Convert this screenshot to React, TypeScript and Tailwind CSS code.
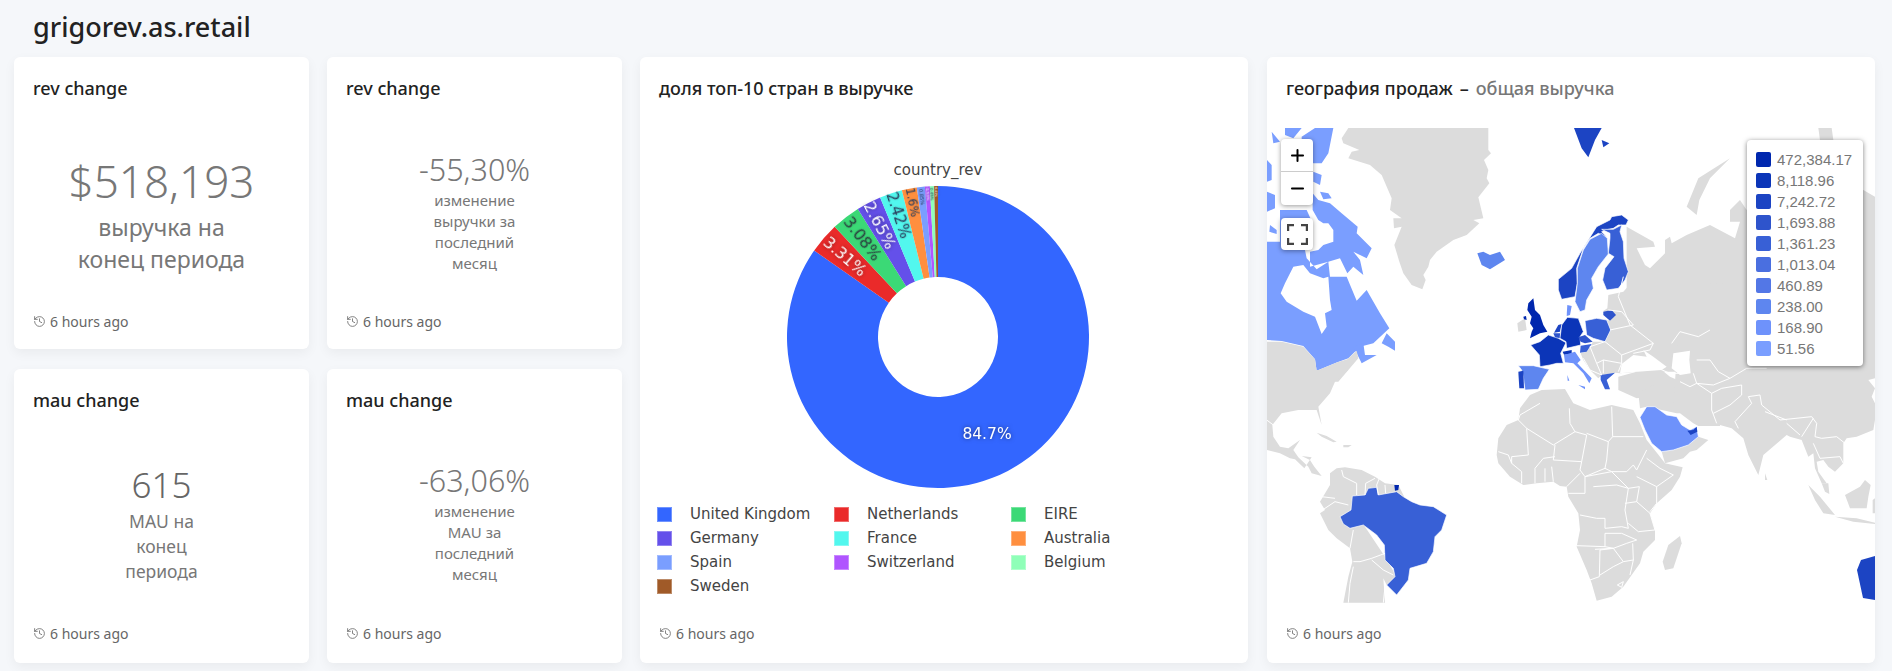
import React from 'react'
import { History, Plus, Minus } from 'lucide-react'

const Z5 = 'translate(1260 110) scale(0.33333)'
const Z6 = 'translate(1570 110) scale(0.33333)'
const Z8 = 'translate(1490 200) scale(0.33333)'
const Z9 = 'translate(1680 340) scale(0.33333)'
const Z10 = 'translate(1480 380) scale(0.33333)'
const Z11 = 'translate(1265 370) scale(0.33333)'

const GRAY = '#dcdcdc'
const C1 = '#0027ae'
const C2 = '#0b35b8'
const C3 = '#1c44c3'
const C4 = '#2e54cc'
const C5 = '#3860d6'
const C7 = '#5377e6'
const C8 = '#5e86ef'
const C9 = '#6e92fb'
const C10 = '#7a9eff'

const slices = [
  { name: 'United Kingdom', color: '#3366ff', pct: 84.7 },
  { name: 'Netherlands', color: '#ea2a2a', pct: 3.31, label: '3.31%', fill: '#fff', size: 16, r: 123 },
  { name: 'EIRE', color: '#3bd976', pct: 3.08, label: '3.08%', fill: '#2a3f3f', size: 16, r: 124 },
  { name: 'Germany', color: '#6450ea', pct: 2.65, label: '2.65%', fill: '#fff', size: 16, r: 126 },
  { name: 'France', color: '#52f7ee', pct: 2.42, label: '2.42%', fill: '#2a3f5f', size: 15, r: 128 },
  { name: 'Australia', color: '#ff8f3f', pct: 1.6, label: '1.6%', fill: '#2a3f5f', size: 11.5, r: 137 },
  { name: 'Spain', color: '#7a9eff', pct: 0.85, label: '0.85%', fill: '#2a3f5f', size: 5, r: 141 },
  { name: 'Switzerland', color: '#b055ff', pct: 0.53, label: '0.53%', fill: '#fff', size: 4, r: 143 },
  { name: 'Belgium', color: '#8fffb8', pct: 0.45, label: '0.45%', fill: '#2a3f5f', size: 4, r: 143 },
  { name: 'Sweden', color: '#a05a28', pct: 0.41, label: '0.41%', fill: '#fff', size: 3, r: 145 },
]

const CX = 298
const CY = 209
const R = 151
const RI = 60

function point(r: number, deg: number) {
  const a = (deg * Math.PI) / 180
  return [CX + r * Math.sin(a), CY - r * Math.cos(a)]
}

function slicePath(from: number, to: number) {
  const large = to - from > 180 ? 1 : 0
  const [x1, y1] = point(R, from)
  const [x2, y2] = point(R, to)
  const [x3, y3] = point(RI, to)
  const [x4, y4] = point(RI, from)
  return `M${x1} ${y1}A${R} ${R} 0 ${large} 1 ${x2} ${y2}L${x3} ${y3}A${RI} ${RI} 0 ${large} 0 ${x4} ${y4}Z`
}

function DonutChart() {
  let start = 0
  const parts = slices.map((s) => {
    const from = start
    const to = start + (s.pct / 100) * 360
    start = to
    return { ...s, from, to }
  })
  return (
    <svg width="608" height="372" className="block">
      <text x="298" y="47" textAnchor="middle" fontSize="15" fill="#444" fontFamily="DejaVu Sans, sans-serif">
        country_rev
      </text>
      {parts.map((p) => (
        <path key={p.name} d={slicePath(p.from, p.to)} fill={p.color} />
      ))}
      {parts
        .filter((p) => p.label)
        .map((p) => {
          const mid = (p.from + p.to) / 2
          const [x, y] = point(p.r ?? 122, mid)
          return (
            <text
              key={p.name}
              x={x}
              y={y}
              fontSize={p.size}
              fill={p.fill}
              textAnchor="middle"
              dominantBaseline="central"
              fontFamily="DejaVu Sans, sans-serif"
              transform={`rotate(${mid - 270} ${x} ${y})`}
              className={p.fill === '#fff' ? 'drop-shadow-[0_0_2px_rgba(0,0,0,0.45)]' : 'drop-shadow-[0_0_1px_rgba(0,0,0,0.2)]'}
            >
              {p.label}
            </text>
          )
        })}
      <text
        x="347"
        y="306"
        fontSize="15.5"
        fill="#fff"
        textAnchor="middle"
        dominantBaseline="central"
        fontFamily="DejaVu Sans, sans-serif"
        className="drop-shadow-[0_0_2px_rgba(0,0,0,0.5)]"
      >
        84.7%
      </text>
    </svg>
  )
}

function Land({ g, d, fill = GRAY, stroke = false }: { g: string; d: string; fill?: string; stroke?: boolean }) {
  return <path transform={g} d={d} fill={fill} stroke={stroke ? '#fff' : 'none'} strokeWidth={stroke ? 2 : 0} strokeLinejoin="round" />
}

function Border({ g, d }: { g: string; d: string }) {
  return <path transform={g} d={d} fill="none" stroke="#fff" strokeWidth={3} strokeLinejoin="round" />
}

function WorldMap() {
  return (
    <svg viewBox="1267 128 608 475" width="608" height="475" className="block">
      {/* north america */}
      <Land g={Z5} fill={C10} d="M35,65L60,95 40,100ZM75,54L125,54 100,85 75,75ZM125,80L165,54 220,54 205,130 185,160 160,160 125,130ZM21,150L35,165 35,210 21,215ZM160,185L185,195 180,225 160,215ZM21,245L45,255 45,295 21,305ZM180,245L205,250 215,265 190,268ZM30,345L50,360 50,372 28,365ZM60,300L140,300 158,340 150,420 60,420Z" />
      <Land g={Z5} fill={C10} d="M21,395L130,395 140,445 170,478 205,455 240,445 262,490 280,470 310,495 300,450 280,425 320,445 335,415 290,370 293,350 245,310 210,280 175,270 158,250 158,300 175,330 190,340 205,340 220,360 220,395 190,405 175,420 150,425 150,470 205,455 210,500 260,500 290,572 320,540 360,610 388,655 340,700 300,710 265,745 232,757 170,782 165,748 130,708 65,693 21,690Z" />
      <Land g={Z5} fill="#fff" d="M62,550L75,520 100,470 130,465 150,490 190,505 205,500 210,570 215,600 195,610 200,650 185,672 165,620 130,605 80,575Z" />
      <Land g={Z5} fill={C10} d="M365,700L380,670 405,695 405,722 385,710ZM280,712L310,700 315,735 350,735 305,760 290,730Z" />
      <Land g={Z5} d="M21,695L65,695 130,710 165,748 170,782 232,757 262,748 290,722 295,745 235,815 21,815Z" />
      <Land g={Z11} d="M5,0L250,0 210,35 195,70 160,110 170,165 155,120 100,120 50,130 22,165 25,200 45,230 70,235 105,210 85,240 100,262 130,290 140,310 170,318 148,290 135,270 110,258 140,262 118,295 90,268 75,265 45,250 5,240Z" />
      <Land g={Z11} d="M155,188L185,198 215,215 205,217 170,200ZM235,225L260,225 250,232 235,232Z" />
      <Border g={Z11} d="M5,150L25,165" />
      {/* south america */}
      <Land g={Z11} d="M195,310L215,295 240,292 290,300 330,320 360,340 400,345 420,385 300,470 360,560 395,620 365,645 355,625 360,698 235,698 250,620 262,575 255,535 215,505 190,480 165,430 180,420 165,395 195,345Z" />
      <Land g={Z11} fill={C5} stroke d="M262,378L300,375 310,355 335,352 340,375 395,365 415,380 440,395 465,405 505,410 545,435 530,480 510,500 505,545 485,580 435,595 430,630 395,675 365,645 390,620 385,595 360,570 358,525 335,495 295,465 255,475 235,462 225,440 258,420Z" />
      <Land g={Z11} fill={C1} d="M388,345L402,345 400,360 390,362Z" />
      <Border g={Z11} d="M230,300L235,320 275,340 275,375M300,375L302,340 330,325M345,320L335,345 340,375M360,345L362,370M165,425L210,395 250,405M170,380L210,385M255,535L265,480M265,575L285,575 320,565 360,550M320,570L355,600 385,615M265,590L255,640 250,698M355,698L360,650" />
      {/* greenland, iceland, svalbard */}
      <Land g={Z5} d="M245,85L265,54 685,54 685,120 693,130 672,150 685,180 680,205 688,220 668,245 655,262 670,325 640,330 658,340 620,375 580,390 530,425 510,450 505,470 490,495 497,510 487,538 455,525 430,490 418,455 403,405 425,350 402,355 400,325 425,325 390,300 395,265 365,195 330,165 265,145 275,125 298,120 250,100Z" />
      <Land g={Z5} fill={C8} d="M652,430L670,425 690,435 720,425 735,450 690,478 665,465Z" />
      <Land g={Z6} fill={C3} d="M12,54L95,54 75,90 55,142 35,115ZM95,90L118,100 100,112Z" />
      {/* eurasia */}
      <Land g={Z6} d="M170,350L250,395 255,410 200,415 225,465 240,475 285,430 285,390 300,380 305,400 350,375 420,345 495,385 510,335 480,335 480,300 510,270 530,300 560,200 880,240 915,260 915,780 170,780Z" />
      <Land g={Z6} d="M480,145L385,205 350,290 380,315 388,270 420,205ZM745,54L785,54 790,90 750,90Z" />
      <Land g={Z8} d="M412,262L400,275 355,285 352,325 340,333 345,345 362,362 350,360 362,390 345,425 308,425 305,435 290,455 272,460 280,480 300,510 325,535 335,525 375,518 390,520 440,515 700,515 700,250Z" />
      <Land g={Z8} d="M385,530L440,515 515,510 540,530 610,560 530,580 440,595 385,570Z" />
      <Land g={Z8} d="M82,370L105,355 110,390 85,395Z" />
      <Land g={Z10} d="M480,85L475,40 520,15 620,0 720,0 720,138 655,138 640,130 600,100 590,100 500,80Z" />
      <Land g={Z9} d="M0,-100L585,-100 585,115 565,120 585,145 575,170 585,190 585,240 580,270 530,290 500,295 490,310 490,370 465,395 445,380 430,360 410,365 415,395 440,430 425,430 405,385 400,340 385,350 365,300 330,290 320,285 250,345 235,405 205,345 190,295 155,265 120,255 105,258 60,258 30,235 0,215 -20,200Z" />
      <Land g={Z9} d="M255,400L262,420 255,420ZM385,435L420,470 465,525 430,520 405,480ZM465,530L530,535 585,548 585,552 520,545ZM495,465L540,440 555,420 572,435 565,470 560,505 510,505ZM578,480L585,475 585,520 578,520ZM425,430L445,430 448,462 435,455Z" />
      <Land g={Z8} fill="#fff" d="M395,492L430,465 470,470 460,450 490,470 530,500 515,510 440,515 390,520Z" />
      <Land g={Z9} fill="#fff" d="M-20,40L30,32 28,60 32,100 0,105 -25,85Z" />
      {/* africa and arabia */}
      <Land g={Z10} d="M115,120L120,85 150,45 185,30 255,27 280,70 330,90 395,75 460,90 480,130 500,180 540,230 555,250 608,262 600,290 575,330 530,370 510,400 525,450 525,480 490,515 480,550 455,585 430,620 395,650 350,662 335,610 320,570 290,500 300,450 295,400 265,350 260,320 240,318 220,305 170,310 130,315 90,290 55,250 50,225 55,175 80,135Z" />
      <Land g={Z10} d="M600,468L605,490 580,565 555,570 548,545 565,495Z" />
      <Land g={Z10} d="M545,215L580,210 625,195 655,170 685,180 650,210 630,215 610,235 555,250Z" />
      <Land g={Z10} fill={C9} stroke d="M500,80L525,80 560,105 590,110 605,135 630,150 650,140 655,170 625,195 580,210 545,215 515,190 495,150 480,112Z" />
      <Land g={Z10} fill={C3} d="M622,152L640,150 650,140 652,155 632,165Z" />
      <Border g={Z10} d="M180,70L120,105 115,120 140,145 220,195 285,155 320,165 305,245 220,240 225,195M268,85L270,130 285,155M395,80L398,170 490,170M320,160L385,185 398,170M140,145L145,225 95,230 95,250M225,230L190,235 165,265M305,245L300,270 315,290 375,265 380,240 385,185M375,265L395,275 440,275 460,255 470,270 500,210M470,290L530,320 580,285 540,265 500,235M340,320L410,315 445,325 435,390 445,445 425,440 375,445 375,415 350,415 300,405M375,460L375,500 290,497M375,460L425,460 470,480 440,490 400,505 375,500M345,508L400,505 360,510 358,590 330,600M360,585L400,560 430,545 400,505M430,545L460,540 458,490M460,540L450,585M435,370L470,365 510,400 525,450 475,455 445,430M530,320L530,370 510,395M445,325L478,320 470,365M315,290L395,275 445,325M260,320L300,280M315,290L315,340 265,340M55,215L85,225 95,250 125,275 125,310M165,265L165,310M195,265L195,305M215,260L220,305M412,615L430,605 425,622Z" />
      <Border g={Z9} d="M0,125L30,140 50,130 95,160 95,210 110,250M95,160L125,145 185,135 185,165 150,195 100,220M205,170L215,190 165,245 175,265M50,60L90,60 115,95 150,115 200,85 260,85M40,100L50,130 100,135 150,115M205,170L240,165 245,195 300,240 395,230 410,250M255,215L320,240M320,250L360,285M365,290L400,235M410,250L405,290 425,295 470,290 495,310M400,310L420,355 480,350 490,370" />
      {/* europe */}
      <Land g={Z8} fill={C3} stroke d="M205,238L245,205 270,160 320,80 360,60 365,50 395,45 415,60 408,75 385,75 370,85 345,90 335,95 350,110 325,100 300,115 280,145 260,205 262,250 255,290 215,298 205,270Z" />
      <Land g={Z8} fill={C8} stroke d="M300,118L335,100 352,115 355,162 325,200 305,235 310,265 290,300 285,330 270,335 255,305 262,250 262,205 280,150Z" />
      <Land g={Z8} fill={C5} stroke d="M360,100L335,88 370,88 395,75 390,95 400,125 402,175 415,215 405,240 385,265 350,270 338,240 345,205 372,170 355,160 360,115Z" />
      <Land g={Z8} fill={C4} d="M340,335L365,330 378,345 360,362 340,345Z" />
      <Land g={Z8} fill={C9} d="M232,315L245,318 240,345 230,348Z" />
      <Land g={Z8} fill={C1} d="M115,310L130,295 135,330 150,345 160,375 172,395 150,400 120,415 125,395 130,385 120,370 125,350 112,330ZM100,350L108,348 110,360 102,358Z" />
      <Land g={Z8} fill={C2} stroke d="M122,435L150,425 175,405 205,415 228,428 212,460 220,490 200,490 180,495 150,500 148,465Z" />
      <Land g={Z8} fill={C3} d="M205,375L215,372 210,395 192,398Z" />
      <Land g={Z8} fill={C4} d="M190,400L210,400 212,415 195,412Z" />
      <Land g={Z8} fill={C2} stroke d="M232,352L265,355 280,395 270,410 272,435 230,445 228,425 210,415 215,375Z" />
      <Land g={Z8} fill={C5} stroke d="M285,362L320,355 350,360 362,390 345,425 310,415 290,405Z" />
      <Land g={Z8} fill={C4} d="M265,412L285,405 308,425 285,430 272,425Z" />
      <Land g={Z8} fill={C5} d="M272,437L305,432 290,455 270,458Z" />
      <Land g={Z8} fill={C2} d="M218,455L245,450 245,462 222,464Z" />
      <Land g={Z8} fill={C9} d="M222,465L255,455 272,480 262,490 305,535 298,550 280,520 250,490 225,487ZM232,525L238,542 233,542ZM265,555L285,560 285,568Z" />
      <Land g={Z8} fill={C8} stroke d="M85,497L130,497 178,508 160,535 145,568 105,570 100,530 95,510Z" />
      <Land g={Z8} fill={C3} d="M85,515L100,512 102,565 88,565Z" />
      <Land g={Z8} fill={C5} d="M332,525L375,518 350,540 360,568 345,568 332,540Z" />
      <Border g={Z8} d="M400,230L385,290 420,375 490,430 480,450 430,460M355,330L395,335 430,375 360,390M345,425L395,465 490,430M300,440L345,425M395,465L395,490 340,480 320,490M340,480L340,520M395,490L385,515M280,475L300,510 335,525 320,490 300,440M505,505L540,520 590,520M545,430L570,395 625,410 660,390" />
      {/* australia */}
      <path d="M1875,556L1861,560 1857,570 1863,598 1875,600Z" fill={C3} />
    </svg>
  )
}

function Card({ title, muted, children, className = '' }: { title: string; muted?: string; children: React.ReactNode; className?: string }) {
  return (
    <div className={`flex flex-col bg-white rounded-md shadow-[0_4px_12px_rgba(0,0,0,0.05)] ${className}`}>
      <div className="h-[71px] shrink-0 px-[19px] pt-[19px] text-[18px] font-medium leading-6 text-[#222]">
        {title}
        {muted && (
          <>
            <span className="mx-[7px]">–</span>
            <span className="text-[#777]">{muted}</span>
          </>
        )}
      </div>
      {children}
    </div>
  )
}

function Footer({ className = 'h-[39px]' }: { className?: string }) {
  return (
    <div className={`${className} shrink-0 px-[19px] flex items-start gap-1 text-[14px] leading-5 text-[#666]`}>
      <History size={13} strokeWidth={1.5} className="mt-[3px]" />
      6 hours ago
    </div>
  )
}

function Metric({ value, label, valueClass, labelClass, className }: { value: string; label: string; valueClass: string; labelClass: string; className: string }) {
  return (
    <div className={`flex-1 flex flex-col items-center justify-center text-center text-[#777] ${className}`}>
      <div className={`font-light ${valueClass}`}>{value}</div>
      <div className={labelClass}>{label}</div>
    </div>
  )
}

const legend = [...slices]
const mapLegend: [string, string][] = [
  [C1, '472,384.17'],
  [C2, '8,118.96'],
  [C3, '7,242.72'],
  [C4, '1,693.88'],
  [C5, '1,361.23'],
  ['#4a6fe0', '1,013.04'],
  [C7, '460.89'],
  [C8, '238.00'],
  [C9, '168.90'],
  [C10, '51.56'],
]

export default function App() {
  return (
    <div className="w-[1892px] h-[671px] overflow-hidden bg-[#f5f7fa] font-['Noto_Sans',sans-serif] pl-[14px]">
      <h1 className="h-[57px] pl-[19px] pt-[7px] text-[27px] leading-[40px] font-medium text-[#222]">grigorev.as.retail</h1>
      <div className="grid grid-cols-[295px_295px_608px_609px] grid-rows-[292px_294px] gap-x-[18px] gap-y-[20px]">
        <Card title="rev change">
          <Metric
            value="$518,193"
            label="выручка на конец периода"
            className="pb-[14px]"
            valueClass="text-[44px] leading-[60px]"
            labelClass="w-[175px] text-[23px] leading-[32px]"
          />
          <Footer className="h-[37px]" />
        </Card>
        <Card title="rev change">
          <Metric
            value="-55,30%"
            label="изменение выручки за последний месяц"
            className="pb-[18px]"
            valueClass="text-[30.5px] leading-[42px]"
            labelClass="w-[100px] text-[15px] leading-[21px]"
          />
          <Footer className="h-[37px]" />
        </Card>
        <Card title="доля топ-10 стран в выручке" className="col-start-3 row-start-1 row-span-2">
          <div className="-mt-[71px] mb-[-1px] pt-[71px]">
            <DonutChart />
          </div>
          <div className="flex-1 pl-[17px] pt-[8px] grid grid-cols-[177px_177px_177px] auto-rows-[24px] font-['DejaVu_Sans',sans-serif] text-[15px] text-[#444]">
            {legend.map((s) => (
              <div key={s.name} className="flex items-start gap-[18px] leading-[15px]">
                <span className="w-[15px] h-[15px] shrink-0 border border-white/30" style={{ backgroundColor: s.color }} />
                {s.name}
              </div>
            ))}
          </div>
          <Footer />
        </Card>
        <Card title="география продаж" muted="общая выручка" className="col-start-4 row-start-1 row-span-2 relative ml-px">
          <WorldMap />
          <div className="absolute left-[14px] top-[82px] w-[32px] rounded bg-white shadow-[0_1px_5px_rgba(0,0,0,0.4)] text-black">
            <div className="h-[33px] flex items-center justify-center border-b border-[#ccc]">
              <Plus size={19} strokeWidth={2.5} />
            </div>
            <div className="h-[33px] flex items-center justify-center">
              <Minus size={19} strokeWidth={2.5} />
            </div>
          </div>
          <div className="absolute left-[14px] top-[161px] w-[32px] h-[32px] rounded bg-white shadow-[0_1px_5px_rgba(0,0,0,0.4)] flex items-center justify-center">
            <svg width="21" height="21" viewBox="0 0 21 21" fill="none" stroke="#444" strokeWidth="2.4">
              <path d="M1 7V1H7M14 1H20V7M20 14V20H14M7 20H1V14" />
            </svg>
          </div>
          <div className="absolute left-[480px] top-[83px] w-[116px] h-[226px] rounded bg-white shadow-[0_1px_5px_rgba(0,0,0,0.5)] px-[9px] pt-[9px] font-['Liberation_Sans',sans-serif] text-[15px] text-[#777]">
            {mapLegend.map(([color, label]) => (
              <div key={label} className="h-[21px] flex items-center gap-[6px] leading-none">
                <span className="w-[15px] h-[15px] rounded-[2px]" style={{ backgroundColor: color }} />
                {label}
              </div>
            ))}
          </div>
          <div className="flex-1" />
          <Footer />
        </Card>
        <Card title="mau change">
          <Metric
            value="615"
            label="MAU на конец периода"
            className="pb-[20px]"
            valueClass="text-[35px] leading-[48px] text-[#666]"
            labelClass="w-[90px] text-[17.5px] leading-[25px]"
          />
          <Footer />
        </Card>
        <Card title="mau change">
          <Metric
            value="-63,06%"
            label="изменение MAU за последний месяц"
            className="pb-[20px]"
            valueClass="text-[30.5px] leading-[42px]"
            labelClass="w-[100px] text-[15px] leading-[21px]"
          />
          <Footer />
        </Card>
      </div>
    </div>
  )
}
